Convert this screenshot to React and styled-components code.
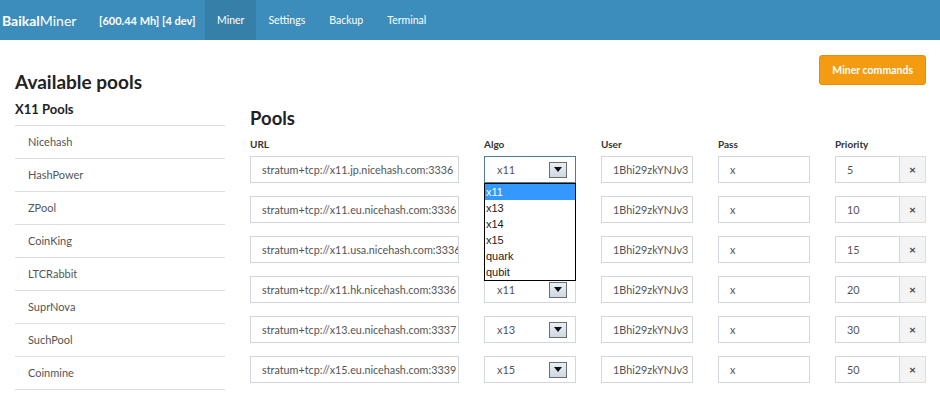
import React from "react";
import styled, { createGlobalStyle } from "styled-components";

const GlobalStyle = createGlobalStyle`
  body {
    margin: 0;
    background: #fff;
    font-family: "Lato", "Open Sans", sans-serif;
    color: #333;
  }
`;

const pools = [
  "Nicehash",
  "HashPower",
  "ZPool",
  "CoinKing",
  "LTCRabbit",
  "SuprNova",
  "SuchPool",
  "Coinmine"
];

const rows = [
  { url: "stratum+tcp://x11.jp.nicehash.com:3336", algo: "x11", priority: "5", open: true },
  { url: "stratum+tcp://x11.eu.nicehash.com:3336", algo: "x11", priority: "10" },
  { url: "stratum+tcp://x11.usa.nicehash.com:3336", algo: "x11", priority: "15" },
  { url: "stratum+tcp://x11.hk.nicehash.com:3336", algo: "x11", priority: "20" },
  { url: "stratum+tcp://x13.eu.nicehash.com:3337", algo: "x13", priority: "30" },
  { url: "stratum+tcp://x15.eu.nicehash.com:3339", algo: "x15", priority: "50" }
];

const algos = ["x11", "x13", "x14", "x15", "quark", "qubit"];

export default function App() {
  return (
    <>
      <GlobalStyle />
      <Navbar>
        <Brand>
          <b>Baikal</b>Miner
        </Brand>
        <Stats>[600.44 Mh] [4 dev]</Stats>
        <Tab active>Miner</Tab>
        <Tab>Settings</Tab>
        <Tab>Backup</Tab>
        <Tab>Terminal</Tab>
      </Navbar>
      <Content>
        <Sidebar>
          <BigTitle>Available pools</BigTitle>
          <GroupTitle>X11 Pools</GroupTitle>
          <PoolList>
            {pools.map((p) => (
              <PoolItem key={p}>{p}</PoolItem>
            ))}
          </PoolList>
        </Sidebar>
        <Main>
          <Actions>
            <OrangeButton>Miner commands</OrangeButton>
          </Actions>
          <SectionTitle>Pools</SectionTitle>
          <PoolGrid>
            <Head>URL</Head>
            <Head>Algo</Head>
            <Head>User</Head>
            <Head>Pass</Head>
            <Head>Priority</Head>
            {rows.map((r) => (
              <React.Fragment key={r.priority}>
                <Field>{r.url}</Field>
                <SelectWrap>
                  <Select focused={r.open}>
                    <span>{r.algo}</span>
                    <Arrow>
                      <svg width="8" height="5" viewBox="0 0 8 5">
                        <path d="M0 0h8L4 5z" fill="#111" />
                      </svg>
                    </Arrow>
                  </Select>
                  {r.open && (
                    <Dropdown>
                      {algos.map((a) => (
                        <Option key={a} selected={a === r.algo}>
                          {a}
                        </Option>
                      ))}
                    </Dropdown>
                  )}
                </SelectWrap>
                <Field>1Bhi29zkYNJv3</Field>
                <Field>x</Field>
                <PriorityGroup>
                  <Field>{r.priority}</Field>
                  <RemoveButton>×</RemoveButton>
                </PriorityGroup>
              </React.Fragment>
            ))}
          </PoolGrid>
        </Main>
      </Content>
    </>
  );
}

const Navbar = styled.div`
  height: 40px;
  background: #3c8dbc;
  display: flex;
  align-items: stretch;
  color: #fff;
`;

const Brand = styled.div`
  display: flex;
  align-items: center;
  padding-left: 2px;
  font-size: 14px;
  width: 97px;

  & b {
    font-weight: 700;
  }
`;

const Stats = styled.div`
  display: flex;
  align-items: center;
  font-size: 11px;
  font-weight: 700;
  width: 106px;
`;

const Tab = styled.div`
  display: flex;
  align-items: center;
  padding: 0 12px;
  font-size: 10.5px;
  background: ${(p) => (p.active ? "#367fa9" : "transparent")};
`;

const Content = styled.div`
  display: grid;
  grid-template-columns: 210px 1fr;
  column-gap: 25px;
  padding: 0 14px 0 15px;
`;

const Sidebar = styled.div`
  padding-top: 30px;
`;

const BigTitle = styled.div`
  font-size: 19px;
  font-weight: 700;
  color: #222;
  line-height: 24px;
`;

const GroupTitle = styled.div`
  font-size: 13px;
  font-weight: 700;
  color: #222;
  line-height: 18px;
  margin-top: 6px;
  margin-bottom: 7px;
`;

const PoolList = styled.div`
  border-top: 1px solid #ddd;
`;

const PoolItem = styled.div`
  height: 32px;
  line-height: 32px;
  border-bottom: 1px solid #ddd;
  padding-left: 13px;
  font-size: 11px;
  color: #555;
`;

const Main = styled.div`
  padding-top: 15px;
`;

const Actions = styled.div`
  display: flex;
  justify-content: flex-end;
`;

const OrangeButton = styled.div`
  background: #f39c12;
  border: 1px solid #e08e0b;
  border-radius: 3px;
  color: #fff;
  font-size: 10.5px;
  font-weight: 700;
  height: 28px;
  line-height: 28px;
  padding: 0 12px;
`;

const SectionTitle = styled.div`
  font-size: 18.5px;
  font-weight: 700;
  color: #222;
  line-height: 24px;
  margin-top: 21px;
`;

const PoolGrid = styled.div`
  display: grid;
  grid-template-columns: 209px 92px 92px 92px 91px;
  column-gap: 25px;
  row-gap: 13px;
  margin-top: 7px;
`;

const Head = styled.div`
  font-size: 10px;
  font-weight: 700;
  color: #333;
  line-height: 14px;
  margin-bottom: -8px;
`;

const Field = styled.div`
  box-sizing: border-box;
  height: 27px;
  border: 1px solid #d2d6de;
  padding-left: 11px;
  font-size: 10.8px;
  color: #555;
  line-height: 25px;
  white-space: nowrap;
  overflow: hidden;
  min-width: 0;
  flex: 1;
`;

const SelectWrap = styled.div`
  position: relative;
`;

const Select = styled.div`
  box-sizing: border-box;
  height: 27px;
  border: 1px solid ${(p) => (p.focused ? "#4f7d8f" : "#d2d6de")};
  display: flex;
  align-items: center;
  justify-content: space-between;
  padding: 0 8px 0 12px;
  font-size: 11px;
  color: #555;
`;

const Arrow = styled.div`
  box-sizing: border-box;
  width: 18px;
  height: 16px;
  border: 1px solid #6d6d6d;
  background: linear-gradient(#e8eef4, #cfd9e3);
  display: flex;
  align-items: center;
  justify-content: center;
`;

const Dropdown = styled.div`
  position: absolute;
  top: 27px;
  left: 0;
  width: 92px;
  box-sizing: border-box;
  border: 1px solid #000;
  background: #fff;
  z-index: 5;
  font-family: "Liberation Sans", sans-serif;
`;

const Option = styled.div`
  height: 16px;
  line-height: 16px;
  padding-left: 1px;
  font-size: 11px;
  color: ${(p) => (p.selected ? "#fff" : "#222")};
  background: ${(p) => (p.selected ? "#3399ff" : "transparent")};
`;

const PriorityGroup = styled.div`
  display: flex;
`;

const RemoveButton = styled.div`
  box-sizing: border-box;
  width: 26px;
  height: 27px;
  flex: none;
  border: 1px solid #ddd;
  border-left: none;
  background: #f4f4f4;
  display: flex;
  align-items: center;
  justify-content: center;
  font-size: 12px;
  font-weight: 700;
  color: #444;
`;
